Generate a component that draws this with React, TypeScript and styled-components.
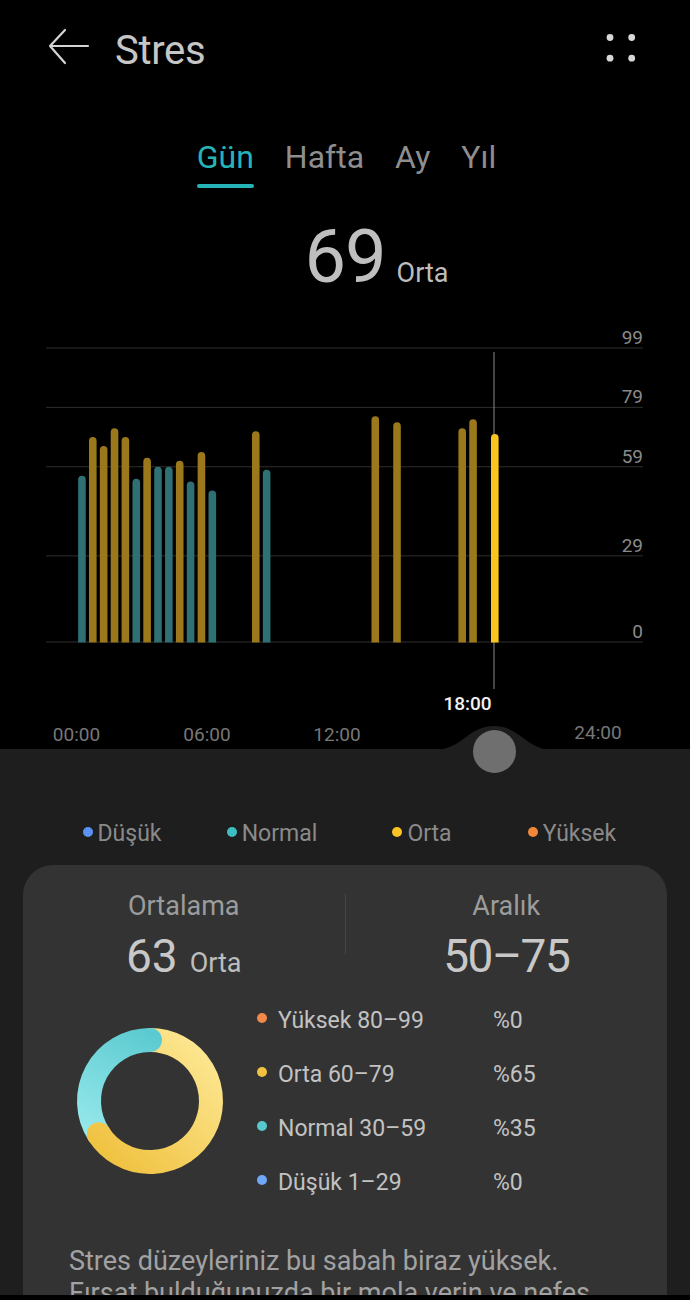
import React from 'react'
import styled, { createGlobalStyle } from 'styled-components'

type Level = 'normal' | 'orta'

interface Bar {
	h: number
	v: number
	level: Level
	active?: boolean
}

const bars: Bar[] = [
	{ h: 0.25, v: 56, level: 'normal' },
	{ h: 0.75, v: 69, level: 'orta' },
	{ h: 1.25, v: 66, level: 'orta' },
	{ h: 1.75, v: 72, level: 'orta' },
	{ h: 2.25, v: 69, level: 'orta' },
	{ h: 2.75, v: 55, level: 'normal' },
	{ h: 3.25, v: 62, level: 'orta' },
	{ h: 3.75, v: 59, level: 'normal' },
	{ h: 4.25, v: 59, level: 'normal' },
	{ h: 4.75, v: 61, level: 'orta' },
	{ h: 5.25, v: 54, level: 'normal' },
	{ h: 5.75, v: 64, level: 'orta' },
	{ h: 6.25, v: 51, level: 'normal' },
	{ h: 8.25, v: 71, level: 'orta' },
	{ h: 8.75, v: 58, level: 'normal' },
	{ h: 13.75, v: 76, level: 'orta' },
	{ h: 14.75, v: 74, level: 'orta' },
	{ h: 17.75, v: 72, level: 'orta' },
	{ h: 18.25, v: 75, level: 'orta' },
	{ h: 19.25, v: 70, level: 'orta', active: true },
]

const gridValues = [99, 79, 59, 29, 0]

const timeLabels = [
	{ text: '00:00', x: 76.5, y: 742 },
	{ text: '06:00', x: 207, y: 742 },
	{ text: '12:00', x: 337, y: 742 },
	{ text: '24:00', x: 598, y: 740 },
]

const legend = [
	{ label: 'Düşük', color: '#5b93f5' },
	{ label: 'Normal', color: '#3dbdbf' },
	{ label: 'Orta', color: '#f7c325' },
	{ label: 'Yüksek', color: '#f2873a' },
]

const ranges = [
	{ label: 'Yüksek 80–99', value: '%0', color: '#f2884a' },
	{ label: 'Orta 60–79', value: '%65', color: '#f1c23f' },
	{ label: 'Normal 30–59', value: '%35', color: '#56c9cc' },
	{ label: 'Düşük 1–29', value: '%0', color: '#6ea8f7' },
]

const xOf = (h: number) => 76.5 + h * 21.73
const yOf = (v: number) => 643 - v * 2.97

function barPath(x: number, top: number, base: number, w: number) {
	const r = w / 2
	return `M${x - r},${base} V${top + r} A${r},${r} 0 0 1 ${x + r},${top + r} V${base} Z`
}

function barColor(b: Bar) {
	if (b.active) return '#f8c51f'
	return b.level === 'orta' ? '#9a781b' : '#2f7074'
}

const GlobalStyle = createGlobalStyle`
	html, body {
		margin: 0;
		padding: 0;
		background: #000;
	}
	body {
		font-family: Roboto, "Noto Sans", Arial, sans-serif;
		-webkit-font-smoothing: antialiased;
	}
	* {
		box-sizing: border-box;
	}
`

export default function App() {
	return (
		<Page>
			<GlobalStyle />

			{/* Header */}
			<Header>
				<IconButton aria-label="geri">
					<svg width="42" height="40" viewBox="0 0 42 40">
						<path
							d="M2 18 H40 M2 18 L17 2 M2 18 L17 35"
							stroke="#d4d4d4"
							strokeWidth="2.2"
							fill="none"
							strokeLinecap="round"
						/>
					</svg>
				</IconButton>
				<Title>Stres</Title>
				<Spacer />
				<IconButton aria-label="daha fazla">
					<svg width="30" height="30" viewBox="0 0 30 30">
						<circle cx="4" cy="4.5" r="3.4" fill="#d8d8d8" />
						<circle cx="25.7" cy="4.5" r="3.4" fill="#d8d8d8" />
						<circle cx="4" cy="25.2" r="3.4" fill="#d8d8d8" />
						<circle cx="25.7" cy="25.2" r="3.4" fill="#d8d8d8" />
					</svg>
				</IconButton>
			</Header>

			{/* Tabs */}
			<Tabs>
				<Tab active>Gün</Tab>
				<Tab>Hafta</Tab>
				<Tab>Ay</Tab>
				<Tab>Yıl</Tab>
			</Tabs>

			{/* Current value */}
			<ValueRow>
				<span />
				<BigValue>69</BigValue>
				<ValueLevel>Orta</ValueLevel>
			</ValueRow>

			{/* Chart */}
			<ChartSvg width="690" height="430" viewBox="0 320 690 430">
				{gridValues.map((v) => (
					<g key={v}>
						<line x1="46" x2="643" y1={yOf(v)} y2={yOf(v)} stroke="#2f2f2f" strokeWidth="1" />
						<text x="643" y={yOf(v) - 4} textAnchor="end" fontSize="19" fill="#8a8a8a">
							{v}
						</text>
					</g>
				))}
				<line x1="494" x2="494" y1="353" y2="690" stroke="#8a8a8a" strokeWidth="1" />
				{bars.map((b) => (
					<path key={b.h} d={barPath(xOf(b.h), yOf(b.v), 643.5, 7.6)} fill={barColor(b)} />
				))}
				<text x="467.5" y="711" textAnchor="middle" fontSize="19" fontWeight="500" fill="#f2f2f2">
					18:00
				</text>
				{timeLabels.map((t) => (
					<text key={t.text} x={t.x} y={t.y} textAnchor="middle" fontSize="19" fill="#777">
						{t.text}
					</text>
				))}
			</ChartSvg>

			{/* Lower panel */}
			<Panel>
				<Bump width="120" height="25" viewBox="0 0 120 25">
					<path d="M0,25 C28,25 34,1 60,1 C86,1 92,25 120,25 Z" fill="#1e1e1e" />
				</Bump>
				<Knob />

				<Legend>
					{legend.map((l) => (
						<LegendItem key={l.label}>
							<Dot color={l.color} size={10} />
							{l.label}
						</LegendItem>
					))}
				</Legend>

				<Card>
					<CardHeader>
						<StatColumn>
							<StatTitle>Ortalama</StatTitle>
							<StatValue>
								63<StatUnit>Orta</StatUnit>
							</StatValue>
						</StatColumn>
						<Divider />
						<StatColumn>
							<StatTitle>Aralık</StatTitle>
							<StatValue tight>50–75</StatValue>
						</StatColumn>
					</CardHeader>

					<Breakdown>
						<svg width="150" height="150" viewBox="0 0 150 150">
							<defs>
								<linearGradient id="teal" gradientUnits="userSpaceOnUse" x1="20" y1="115" x2="75" y2="8">
									<stop offset="0" stopColor="#98e9ec" />
									<stop offset="1" stopColor="#5ccbd1" />
								</linearGradient>
								<linearGradient id="gold" gradientUnits="userSpaceOnUse" x1="130" y1="20" x2="30" y2="125">
									<stop offset="0" stopColor="#fde792" />
									<stop offset="1" stopColor="#f0c343" />
								</linearGradient>
							</defs>
							<path
								d="M75,14 A61,61 0 1 1 23.84,108.22"
								stroke="url(#gold)"
								strokeWidth="24"
								fill="none"
							/>
							<path
								d="M23.84,108.22 A61,61 0 0 1 75,14"
								stroke="url(#teal)"
								strokeWidth="24"
								fill="none"
							/>
							<circle cx="75" cy="14" r="12" fill="url(#teal)" />
							<circle cx="23.84" cy="108.22" r="12" fill="url(#gold)" />
						</svg>

						<RangeList>
							{ranges.map((r) => (
								<React.Fragment key={r.label}>
									<RangeLabel>
										<Dot color={r.color} size={10} />
										{r.label}
									</RangeLabel>
									<RangeValue>{r.value}</RangeValue>
								</React.Fragment>
							))}
						</RangeList>
					</Breakdown>

					<Advice>
						Stres düzeyleriniz bu sabah biraz yüksek.
						<br />
						Fırsat bulduğunuzda bir mola verin ve nefes egzersizleri yapın.
					</Advice>
				</Card>
			</Panel>

			<NavStrip />
		</Page>
	)
}

const Page = styled.div`
	width: 690px;
	min-height: 1300px;
	background: #000;
	overflow: hidden;
`

const Header = styled.header`
	height: 100px;
	display: flex;
	align-items: center;
	padding: 0 54px 0 48px;
`

const IconButton = styled.div`
	display: flex;
	align-items: center;
	margin-top: -4px;
`

const Title = styled.h1`
	margin: 0 0 0 25px;
	font-size: 40px;
	font-weight: 400;
	color: #c6c6c6;
	letter-spacing: -0.3px;
`

const Spacer = styled.div`
	flex: 1;
`

const Tabs = styled.nav`
	margin-top: 39px;
	display: flex;
	justify-content: center;
	gap: 31px;
	padding-left: 3px;
`

const Tab = styled.div<{ active?: boolean }>`
	position: relative;
	font-size: 32px;
	line-height: 37px;
	color: ${(p) => (p.active ? '#26b3b8' : '#8e8e8e')};
	padding-bottom: 12px;

	&::after {
		content: '';
		display: ${(p) => (p.active ? 'block' : 'none')};
		position: absolute;
		left: 0;
		right: 0;
		bottom: 0;
		height: 4px;
		border-radius: 2px;
		background: #26b3b8;
	}
`

const ValueRow = styled.div`
	margin-top: 33px;
	display: grid;
	grid-template-columns: 1fr auto 1fr;
	align-items: baseline;
	height: 72px;
`

const BigValue = styled.div`
	font-size: 74px;
	line-height: 72px;
	color: #bfbfbf;
	letter-spacing: -1px;
`

const ValueLevel = styled.div`
	margin-left: 11px;
	font-size: 27px;
	color: #bdbdbd;
`

const ChartSvg = styled.svg`
	display: block;
	margin-top: 26px;
	font-family: Roboto, "Noto Sans", Arial, sans-serif;
`

const Panel = styled.section`
	position: relative;
	background: #1e1e1e;
	padding-top: 70px;
	min-height: 550px;
`

const Bump = styled.svg`
	position: absolute;
	top: -24px;
	left: 434px;
	display: block;
`

const Knob = styled.div`
	position: absolute;
	top: -19px;
	left: 473px;
	width: 43px;
	height: 43px;
	border-radius: 50%;
	background: #6f6f6f;
`

const Legend = styled.div`
	display: grid;
	grid-template-columns: repeat(4, 150px);
	justify-content: center;
	padding-left: 4px;
`

const LegendItem = styled.div`
	justify-self: center;
	display: flex;
	align-items: center;
	gap: 5px;
	font-size: 23px;
	line-height: 30px;
	color: #8a8a8a;
`

const Dot = styled.span<{ color: string; size: number }>`
	display: inline-block;
	width: ${(p) => p.size}px;
	height: ${(p) => p.size}px;
	border-radius: 50%;
	background: ${(p) => p.color};
	flex-shrink: 0;
	margin-top: -4px;
`

const Card = styled.div`
	margin: 16px 23px 0;
	background: #333333;
	border-radius: 30px 30px 0 0;
	padding: 25px 0 60px;
`

const CardHeader = styled.div`
	display: grid;
	grid-template-columns: 1fr 1px 1fr;
`

const StatColumn = styled.div`
	display: flex;
	flex-direction: column;
	align-items: center;
`

const StatTitle = styled.div`
	font-size: 27px;
	line-height: 32px;
	color: #9c9c9c;
`

const StatValue = styled.div<{ tight?: boolean }>`
	margin-top: 8px;
	font-size: 46px;
	line-height: 52px;
	color: #c8c8c8;
	display: flex;
	align-items: baseline;
	letter-spacing: ${(p) => (p.tight ? '-1.5px' : '0')};
`

const StatUnit = styled.span`
	margin-left: 12px;
	font-size: 27px;
	color: #bdbdbd;
`

const Divider = styled.div`
	margin-top: 4px;
	height: 60px;
	background: #454545;
`

const Breakdown = styled.div`
	margin-top: 4px;
	display: flex;
	align-items: center;
	padding-left: 52px;

	svg {
		display: block;
		flex-shrink: 0;
	}
`

const RangeList = styled.div`
	margin-left: 32px;
	display: grid;
	grid-template-columns: 236px auto;
	grid-auto-rows: 54px;
	align-items: center;
`

const RangeLabel = styled.div`
	display: flex;
	align-items: center;
	gap: 11px;
	font-size: 23px;
	color: #c2c2c2;
`

const RangeValue = styled.div`
	font-size: 23px;
	color: #c2c2c2;
`

const Advice = styled.p`
	margin: 36px 28px 0 46px;
	font-size: 27px;
	line-height: 32px;
	color: #a2a2a2;
`

const NavStrip = styled.div`
	position: fixed;
	left: 0;
	right: 0;
	bottom: 0;
	height: 5px;
	background: #000;
`
